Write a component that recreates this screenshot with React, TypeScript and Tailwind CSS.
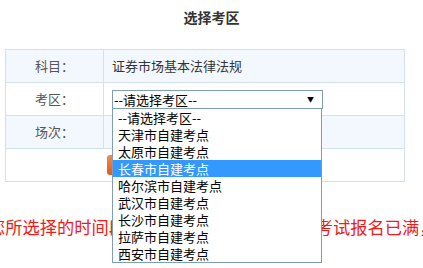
const font = { fontFamily: '"Noto Sans CJK SC", "Liberation Sans", sans-serif' }

const options = [
  "--请选择考区--",
  "天津市自建考点",
  "太原市自建考点",
  "长春市自建考点",
  "哈尔滨市自建考点",
  "武汉市自建考点",
  "长沙市自建考点",
  "拉萨市自建考点",
  "西安市自建考点",
]

function Row({ label, children, shaded }: { label: string; children: React.ReactNode; shaded?: boolean }) {
  return (
    <div className={`flex h-[33px] border-b border-[#d3e1ee] ${shaded ? "bg-[#f2f8fd]" : "bg-white"}`}>
      <div className="flex w-[98px] items-center justify-center border-r border-[#d3e1ee] text-[13px] text-[#555]">
        {label}
      </div>
      <div className="flex flex-1 items-center pl-[8px] text-[13px] text-[#333]">{children}</div>
    </div>
  )
}

export default function App() {
  return (
    <div className="relative h-[268px] w-[423px] overflow-hidden bg-white" style={font}>
      <div className="flex h-[35px] items-center justify-center text-[14px] font-bold text-[#333]">选择考区</div>

      <div className="ml-[5px] mt-[14px] w-[400px] border-l border-r border-t border-[#d3e1ee]">
        <Row label="科目：" shaded>
          证券市场基本法律法规
        </Row>
        <Row label="考区：">
          <div className="relative">
            <div className="flex h-[19px] w-[211px] items-center justify-between border border-[#7f9db9] bg-white pl-[1px] pr-[8px] leading-none text-black">
              <span>--请选择考区--</span>
              <span className="text-[7px]">▼</span>
            </div>
            <div className="absolute left-0 top-[18px] z-10 w-[210px] border border-[#7f9db9] bg-white">
              {options.map((o, i) => (
                <div
                  key={o}
                  className={`h-[17px] whitespace-nowrap pl-[5px] text-[13px] leading-[17px] ${
                    i === 3 ? "bg-[#3399ff] text-white" : "text-black"
                  }`}
                >
                  {o}
                </div>
              ))}
            </div>
          </div>
        </Row>
        <Row label="场次：" shaded>
          {null}
        </Row>
        <div className="flex h-[33px] items-center justify-center gap-[17px] border-b border-[#d3e1ee] bg-white">
          <button className="h-[20px] w-[90px] rounded-[3px] bg-gradient-to-b from-[#f58a4a] to-[#e25a14] text-[12px] text-white">
            确定
          </button>
          <button className="h-[20px] w-[90px] rounded-[3px] bg-gradient-to-b from-[#f58a4a] to-[#e25a14] text-[12px] text-white">
            返回
          </button>
        </div>
      </div>

      <div className="-ml-[12px] mt-[35px] whitespace-nowrap text-[17.25px] leading-[20px] text-[#f01a1a]">
        您所选择的时间段内您所选考区中的该场次考试报名已满，请重新选择。
      </div>
    </div>
  )
}
